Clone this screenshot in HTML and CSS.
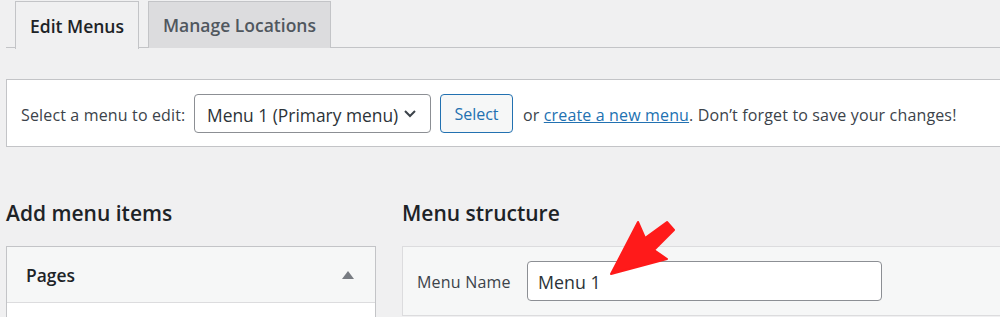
FILE: index.html
```html
<!DOCTYPE html>
<html lang="en">
<head>
    <meta charset="UTF-8">
    <title>Menus</title>
    <link rel="stylesheet" href="styles.css">
</head>
<body>
    <div class="wrap">
        <nav class="tabs">
            <a class="tab active" href="#">Edit Menus</a>
            <a class="tab" href="#">Manage Locations</a>
        </nav>

        <div class="manage-menus">
            <span class="select-label">Select a menu to edit:</span>
            <div class="menu-select">
                <span>Menu 1 (Primary menu)</span>
                <svg width="16" height="16" viewBox="0 0 16 16"><path d="M3 6l5 5 5-5" fill="none" stroke="#3c434a" stroke-width="2"/></svg>
            </div>
            <button class="btn">Select</button>
            <span class="hint">or <a href="#">create a new menu</a>. Don’t forget to save your changes!</span>
        </div>

        <div class="columns">
            <div class="col-left">
                <h2>Add menu items</h2>
                <div class="box">
                    <div class="box-head">
                        <span>Pages</span>
                        <span class="toggle"></span>
                    </div>
                    <div class="box-body"></div>
                </div>
            </div>
            <div class="col-right">
                <h2>Menu structure</h2>
                <div class="menu-box">
                    <label for="menu-name">Menu Name</label>
                    <input id="menu-name" type="text" value="Menu 1">
                </div>
            </div>
        </div>

        <!-- red pointer over the menu name field -->
        <svg class="arrow" width="75" height="65" viewBox="605 215 75 65">
            <polygon points="611,274 638,222 645,238 667,222 674,230 654,250 667,259" fill="#ff1a1a" stroke="#ff1a1a" stroke-width="2" stroke-linejoin="round"/>
        </svg>
    </div>
</body>
</html>
```

FILE: styles.css
```css
* {
    margin: 0;
    padding: 0;
    box-sizing: border-box;
}

body {
    background: #f0f0f1;
    font-family: 'Open Sans', sans-serif;
    color: #3c434a;
    height: 317px;
    overflow: hidden;
}

.wrap {
    position: relative;
    width: 1040px;
    padding-left: 6px;
}

.tabs {
    display: flex;
    gap: 9px;
    padding-left: 9px;
    padding-top: 1px;
    border-bottom: 1px solid #c3c4c7;
    height: 48px;
}

.tab {
    display: flex;
    align-items: center;
    padding: 0 14px;
    height: 47px;
    font-size: 17.5px;
    font-weight: 600;
    color: #50575e;
    text-decoration: none;
    background: #dcdcde;
    border: 1px solid #c3c4c7;
    border-bottom: none;
}

.tab.active {
    background: #f0f0f1;
    color: #1d2327;
    height: 48px;
    margin-bottom: -1px;
}

.manage-menus {
    margin-top: 31px;
    height: 68px;
    background: #fff;
    border: 1px solid #c3c4c7;
    display: flex;
    align-items: center;
    padding-left: 14px;
    font-size: 16px;
    white-space: nowrap;
}

.select-label {
    flex-shrink: 0;
    width: 173px;
    letter-spacing: 0.15px;
    padding-top: 4px;
}

.menu-select {
    flex-shrink: 0;
    display: flex;
    align-items: center;
    justify-content: space-between;
    width: 237px;
    height: 39px;
    padding: 0 12px;
    border: 1px solid #8c8f94;
    border-radius: 4px;
    font-size: 17.4px;
    color: #2c3338;
}

.menu-select span {
    padding-top: 3px;
}

.btn {
    flex-shrink: 0;
    margin-left: 9px;
    width: 73px;
    height: 39px;
    padding-top: 2px;
    border: 1px solid #2271b1;
    border-radius: 4px;
    background: #f6f7f7;
    color: #2271b1;
    font-family: inherit;
    font-size: 16px;
}

.hint {
    margin-left: 10px;
    letter-spacing: 0.15px;
    padding-top: 4px;
}

.hint a {
    color: #2271b1;
}

.columns {
    display: flex;
    margin-top: 50px;
}

h2 {
    font-size: 21px;
    font-weight: 600;
    color: #1d2327;
    height: 49px;
    line-height: 32px;
}

.col-left {
    width: 370px;
    margin-right: 26px;
}

.box {
    background: #fff;
    border: 1px solid #c3c4c7;
}

.box-head {
    display: flex;
    justify-content: space-between;
    align-items: center;
    height: 56px;
    padding: 0 21px 0 19px;
    background: #f6f7f7;
    border-bottom: 1px solid #dcdcde;
    font-size: 17.4px;
    font-weight: 600;
    color: #1d2327;
}

.toggle {
    width: 0;
    height: 0;
    border-left: 6px solid transparent;
    border-right: 6px solid transparent;
    border-bottom: 8px solid #787c82;
}

.box-body {
    height: 40px;
}

.col-right {
    flex: 1;
}

.menu-box {
    display: flex;
    align-items: center;
    height: 70px;
    padding-left: 14px;
    background: #f6f7f7;
    border: 1px solid #dcdcde;
}

.menu-box label {
    width: 110px;
    font-size: 16px;
    letter-spacing: 0.2px;
    padding-top: 2px;
}

.menu-box input {
    width: 355px;
    height: 40px;
    padding: 2px 10px 0;
    border: 1px solid #8c8f94;
    border-radius: 4px;
    font-family: inherit;
    font-size: 17.8px;
    color: #2c3338;
}

.arrow {
    position: absolute;
    left: 605px;
    top: 215px;
}
```
